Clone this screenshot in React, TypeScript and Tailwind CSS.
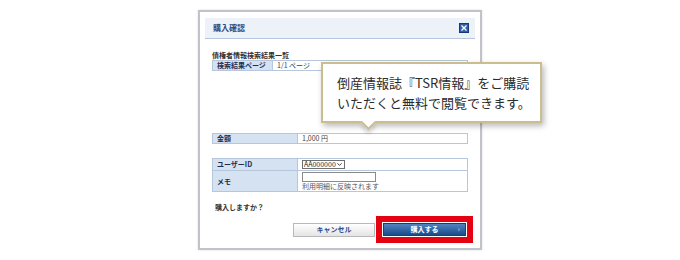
import { ChevronDown } from 'lucide-react'

function Row({ label, children, labelW, h }: { label: string; children: React.ReactNode; labelW: string; h: string }) {
  return (
    <div className={`flex ${h}`}>
      <div className={`${labelW} shrink-0 bg-[#d5e2f1] border-r border-[#b6c6dc] pl-[4px] flex items-center text-[7px] font-bold text-[#1f2f52]`}>
        {label}
      </div>
      <div className="flex-1 bg-white pl-[4px] flex flex-col justify-center text-[7px] text-[#444]">{children}</div>
    </div>
  )
}

export default function App() {
  return (
    <div className="relative w-[680px] h-[260px] bg-white font-['Noto_Sans_CJK_JP',sans-serif]">
      <div className="pl-[198px] pt-[10px]">
        <div className="w-[284px] h-[240px] border-2 border-[#c2c2ca] shadow-[0_0_2px_rgba(0,0,0,0.15)] bg-white pt-[6px] px-[5px] flex flex-col">
          {/* header */}
          <div className="h-[21px] bg-[#edf1f8] border-b border-[#b8c6dd] flex items-center justify-between pl-[8px] pr-[6px]">
            <span className="text-[8px] font-bold text-[#2b4a82] leading-none">購入確認</span>
            <svg width="10" height="10" viewBox="0 0 10 10">
              <rect x="0.5" y="0.5" width="9" height="9" fill="#2f5fab" stroke="#163a78" />
              <path d="M2.5 2.5 L7.5 7.5 M7.5 2.5 L2.5 7.5" stroke="white" strokeWidth="1.4" />
            </svg>
          </div>

          <div className="px-[7px]">
            <div className="mt-[12px] h-[9px] text-[7px] font-bold text-[#333] leading-[9px]">債権者情報検索結果一覧</div>
            <div className="border border-[#b6c6dc]">
              <Row label="検索結果ページ" labelW="w-[60px]" h="h-[9px]">1/1 ページ</Row>
            </div>

            <div className="mt-[62px] border border-[#b6c6dc]">
              <Row label="金額" labelW="w-[85px]" h="h-[9px]">1,000 円</Row>
            </div>

            <div className="mt-[14px] border border-[#b6c6dc]">
              <Row label="ユーザーID" labelW="w-[85px]" h="h-[11px]">
                <div className="w-[43px] h-[9px] border border-[#6f6f6f] flex items-center justify-between px-[1px] text-[7px] text-[#222] leading-none">
                  AA000000
                  <ChevronDown size={7} strokeWidth={3} className="text-[#222]" />
                </div>
              </Row>
              <div className="border-t border-[#b6c6dc]">
                <Row label="メモ" labelW="w-[85px]" h="h-[20px]">
                  <input className="w-[74px] h-[10px] border border-[#8a8a8a] bg-white" />
                  <span className="text-[7px] leading-[9px] text-[#555]">利用明細に反映されます</span>
                </Row>
              </div>
            </div>

            <div className="mt-[11px] pl-[3px] text-[7px] font-bold text-[#333] leading-[9px]">購入しますか？</div>

            <div className="mt-[4px] flex justify-end items-center mr-[-5px]">
              <button className="w-[82px] h-[14px] border border-[#b9b9b9] bg-linear-to-b from-white to-[#e4e4e4] text-[7px] font-bold text-[#2a4d8f] leading-none">
                キャンセル
              </button>
              <div className="ml-[1px] border-[6px] border-[#e50012] p-[1px] bg-white">
                <button className="relative w-[83px] h-[13px] bg-linear-to-b from-[#5283c0] to-[#1b4c8b] border border-[#163f78] text-[7px] font-bold text-white leading-none flex items-center justify-center">
                  購入する
                  <span className="absolute right-[5px] top-[1px] text-[8px] font-normal text-[#c9d8ef]">›</span>
                </button>
              </div>
            </div>
          </div>
        </div>
      </div>

      {/* tooltip */}
      <div className="absolute left-[321px] top-[62px] w-[221px] h-[61px] bg-white border-2 border-[#cbbd8e] shadow-[2px_3px_6px_rgba(0,0,0,0.28)] pl-[14px] pt-[9px] text-[13px] leading-[20px] text-[#2b2b2b]">
        <div className="absolute left-[40px] top-[53px] w-[11px] h-[11px] bg-white border-r-2 border-b-2 border-[#cbbd8e] rotate-45 shadow-[3px_3px_4px_rgba(0,0,0,0.15)]" />
        <div className="relative">倒産情報誌『TSR情報』をご購読</div>
        <div className="relative">いただくと無料で閲覧できます。</div>
      </div>
    </div>
  )
}
